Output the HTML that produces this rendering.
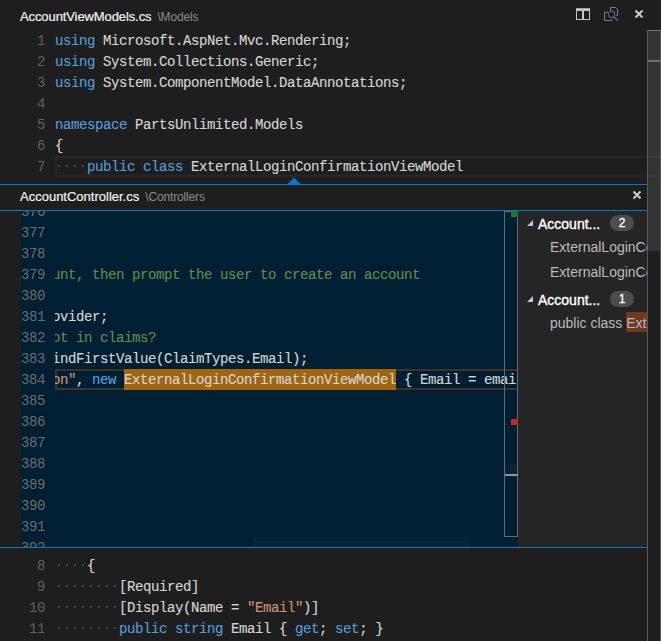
<!DOCTYPE html>
<html><head><meta charset="utf-8">
<style>
*{margin:0;padding:0;box-sizing:border-box}
html,body{width:661px;height:641px;overflow:hidden;background:#1e1e1e}
body{position:relative;font-family:"Liberation Sans",sans-serif}
.abs{position:absolute}
.title{position:absolute;left:20px;white-space:nowrap;color:#f2f2f2;font-size:13px;line-height:16px;-webkit-text-stroke:0.2px #f2f2f2;letter-spacing:-0.1px}
.title .desc{color:#8c8c8c;font-size:12px;margin-left:6px;-webkit-text-stroke:0;letter-spacing:-0.15px}
.code{position:absolute;font-family:"Liberation Mono",monospace;font-size:14px;letter-spacing:-0.4px;line-height:21px;white-space:pre;color:#d4d4d4;padding-top:1px;-webkit-text-stroke:0.15px}
.ln{position:absolute;font-family:"Liberation Mono",monospace;font-size:14px;letter-spacing:-0.4px;line-height:21px;white-space:pre;color:#606060;text-align:right;width:40px;padding-top:1px}
.k{color:#569cd6}.s{color:#ce9178}.c{color:#608b4e}
.ws{color:transparent}
.dots{position:absolute;height:2px;background:repeating-linear-gradient(90deg,transparent 0 3px,#464646 3px 5px,transparent 5px 8px)}
</style></head><body>

<!-- main title -->
<div class="title" style="top:9px">AccountViewModels.cs<span class="desc">\Models</span></div>

<!-- top right icons -->
<div class="abs" style="left:576px;top:8px;width:14px;height:12px;background:#c5c5c5"></div>
<div class="abs" style="left:577px;top:11px;width:5px;height:8px;background:#1e1e1e"></div>
<div class="abs" style="left:584px;top:11px;width:5px;height:8px;background:#1e1e1e"></div>
<div class="abs" style="left:576px;top:8px;width:14px;height:1px;background:#a8a8a8"></div>
<svg class="abs" style="left:603px;top:6px" width="17" height="16" viewBox="0 0 17 16">
  <path d="M5 6.3H1.5V14.5H8.8V12.8" fill="none" stroke="#7f7f7f" stroke-width="1"/>
  <path d="M7.5 4.4V1.5H12.6L14.5 3.4V9.5H13.3" fill="none" stroke="#7f7f7f" stroke-width="1"/>
  <circle cx="8.5" cy="8.3" r="3.2" fill="none" stroke="#43719b" stroke-width="1.1"/>
  <path d="M10.7 10.7L14.8 14.7" stroke="#43719b" stroke-width="1.4"/>
</svg>
<svg class="abs" style="left:634px;top:9px" width="10" height="10" viewBox="0 0 10 10">
  <path d="M1.5 1.5L8.5 8.5M8.5 1.5L1.5 8.5" stroke="#c8c8c8" stroke-width="2.1"/>
</svg>

<!-- main editor line numbers 1-7 -->
<div class="ln" style="left:5px;top:30px">1
2
3
4
5
6
7</div>
<!-- current line highlight line 7 -->
<div class="abs" style="left:55px;top:156px;width:606px;height:21px;border:2px solid #282828;border-right:none"></div>
<div class="code" style="left:55px;top:30px"><span class="k">using</span> Microsoft.AspNet.Mvc.Rendering;
<span class="k">using</span> System.Collections.Generic;
<span class="k">using</span> System.ComponentModel.DataAnnotations;

<span class="k">namespace</span> PartsUnlimited.Models
{
<span class="ws">····</span><span class="k">public</span> <span class="k">class</span> ExternalLoginConfirmationViewModel</div>

<!-- peek widget -->
<svg class="abs" style="left:287px;top:177px" width="14" height="8" viewBox="0 0 14 8"><path d="M0 7.5L7 0.5L14 7.5Z" fill="#007acc"/></svg>
<div class="abs" style="left:0;top:184px;width:647px;height:1px;background:#007acc"></div>
<div class="title" style="top:189px;letter-spacing:0">AccountController.cs<span class="desc">\Controllers</span></div>
<svg class="abs" style="left:632px;top:190px" width="10" height="10" viewBox="0 0 10 10">
  <path d="M1.5 1.5L8.5 8.5M8.5 1.5L1.5 8.5" stroke="#c8c8c8" stroke-width="2.1"/>
</svg>
<div class="abs" style="left:0;top:210px;width:647px;height:1px;background:#007acc"></div>

<!-- peek editor -->
<div class="abs" style="left:21px;top:211px;width:497px;height:336px;background:#001f33;overflow:hidden">
  <div class="ln" style="left:-16px;top:-10px;color:#6c6c6c">376
377
378
379
380
381
382
383
384
385
386
387
388
389
390
391
392</div>
  <div class="abs" style="left:34px;top:0;width:463px;height:336px;overflow:hidden">
    <div class="abs" style="left:0;top:158px;width:463px;height:21px;border:2px solid #3f3428;border-right:none"></div>
    <div class="abs" style="left:69px;top:158px;width:272px;height:21px;background:#a1640f"></div>
    <div class="code" style="left:-3px;top:-10px">


<span class="c">unt, then prompt the user to create an account</span>

ovider;
<span class="c">ot in claims?</span>
indFirstValue(ClaimTypes.Email);
<span class="s">on"</span>, <span class="k">new</span> ExternalLoginConfirmationViewModel { Email = email });</div>
  </div>
  <div class="abs" style="left:232px;top:326px;width:218px;height:10px;background:rgba(255,255,255,0.022)"></div>
  <!-- overview ruler -->
  <div class="abs" style="left:483px;top:0;width:14px;height:326px;border:1px solid #5b6b78"></div>
  <div class="abs" style="left:484px;top:253px;width:12px;height:11px;background:rgba(255,255,255,0.025)"></div>
  <div class="abs" style="left:484px;top:263px;width:13px;height:2px;background:#8f959a"></div>
  <div class="abs" style="left:490px;top:0;width:7px;height:6px;background:#237823"></div>
  <div class="abs" style="left:490px;top:208px;width:7px;height:6px;background:#c72626"></div>
</div>

<!-- references tree -->
<div class="abs" style="left:518px;top:211px;width:129px;height:336px;background:#252526;overflow:hidden;font-size:14px;white-space:nowrap">
  <svg class="abs" style="left:9px;top:9px" width="6" height="6" viewBox="0 0 6 6"><path d="M6 0V6H0Z" fill="#c5c5c5"/></svg>
  <div class="abs" style="left:20px;top:5px;color:#fff;-webkit-text-stroke:0.35px #fff">Account...</div>
  <div class="abs" style="left:92px;top:4px;width:24px;height:16px;border-radius:8px;background:#4d4d4d;color:#fff;font-size:12px;line-height:16px;text-align:center;-webkit-text-stroke:0.3px #fff">2</div>
  <div class="abs" style="left:32px;top:28px;color:#bbbbbb">ExternalLoginConfirmationViewModel</div>
  <div class="abs" style="left:32px;top:53px;color:#bbbbbb">ExternalLoginConfirmationViewModel</div>
  <svg class="abs" style="left:9px;top:85px" width="6" height="6" viewBox="0 0 6 6"><path d="M6 0V6H0Z" fill="#c5c5c5"/></svg>
  <div class="abs" style="left:20px;top:81px;color:#fff;-webkit-text-stroke:0.35px #fff">Account...</div>
  <div class="abs" style="left:92px;top:80px;width:24px;height:16px;border-radius:8px;background:#4d4d4d;color:#fff;font-size:12px;line-height:16px;text-align:center;-webkit-text-stroke:0.3px #fff">1</div>
  <div class="abs" style="left:108px;top:101px;width:30px;height:20px;background:#6b3a1f"></div>
  <div class="abs" style="left:32px;top:104px;color:#bbbbbb">public class Exte</div>
</div>

<div class="abs" style="left:0;top:547px;width:647px;height:1px;background:#007acc"></div>

<!-- main editor lines 8-11 -->
<div class="ln" style="left:5px;top:555px">8
9
10
11</div>
<div class="code" style="left:55px;top:555px"><span class="ws">····</span>{
<span class="ws">········</span>[Required]
<span class="ws">········</span>[Display(Name = <span class="s">"Email"</span>)]
<span class="ws">········</span><span class="k">public</span> <span class="k">string</span> Email { <span class="k">get</span>; <span class="k">set</span>; }</div>

<div class="dots" style="left:55px;top:165px;width:32px"></div>
<div class="dots" style="left:55px;top:564px;width:32px"></div>
<div class="dots" style="left:55px;top:585px;width:64px"></div>
<div class="dots" style="left:55px;top:606px;width:64px"></div>
<div class="dots" style="left:55px;top:627px;width:64px"></div>

<!-- main scrollbar -->
<div class="abs" style="left:647px;top:30px;width:14px;height:611px;border-left:1px solid #5a5a5a;border-right:1px solid #5a5a5a"></div>
<div class="abs" style="left:648px;top:30px;width:12px;height:221px;background:#333333;border-top:1px solid #7a7a7a"></div>
<div class="abs" style="left:648px;top:60px;width:12px;height:2px;background:#6e6e6e"></div>

<div class="abs" style="left:648px;top:156px;width:13px;height:2px;background:rgba(255,255,255,0.04)"></div>
<div class="abs" style="left:648px;top:175px;width:13px;height:2px;background:rgba(255,255,255,0.04)"></div>
</body></html>
